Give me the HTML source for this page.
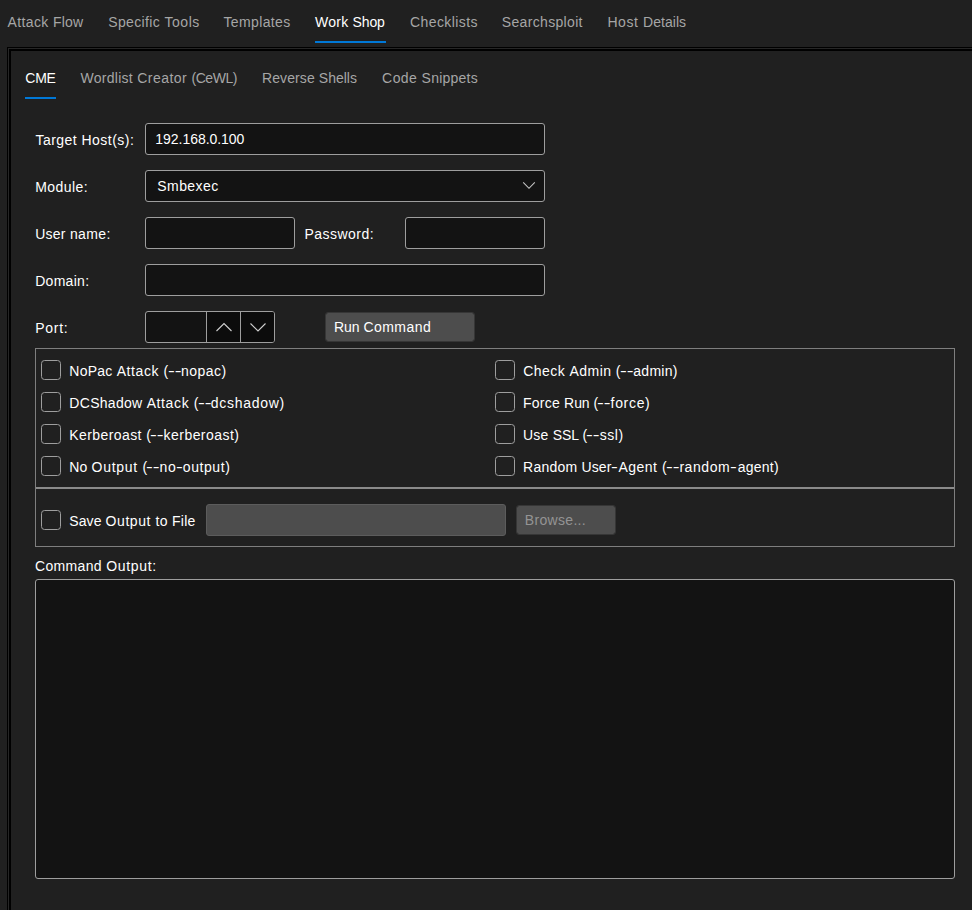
<!DOCTYPE html>
<html lang="en">
<head>
<meta charset="utf-8">
<title>Work Shop - CME</title>
<style>
html,body{margin:0;padding:0;}
body{width:972px;height:910px;background:#202020;overflow:hidden;position:relative;
  font-family:"Liberation Sans",sans-serif;font-size:14px;color:#fff;}
.abs{position:absolute;}
.t{position:absolute;white-space:nowrap;line-height:16px;height:16px;}
.tab{color:#a6a6a6;}
.tab.sel{color:#fff;}
.dis{color:#949494;}
.hy{display:inline-block;transform-origin:0 50%;}
.ul{position:absolute;height:2px;background:#0078d7;}
.frame-a{position:absolute;left:7px;top:47px;width:980px;height:900px;border:1px solid #000;box-sizing:border-box;}
.frame-b{position:absolute;left:9px;top:49px;width:980px;height:900px;border:2px solid #000;box-sizing:border-box;}
.frame-g{position:absolute;left:8px;top:48px;width:980px;height:900px;border:1px solid #262626;box-sizing:border-box;}
.inp{position:absolute;box-sizing:border-box;height:32px;background:#131313;border:1px solid #9e9e9e;border-radius:3px;}
.cb{position:absolute;box-sizing:border-box;width:20px;height:20px;border:1px solid #9e9e9e;border-radius:3.5px;background:#202020;}
.grp{position:absolute;left:35px;top:348px;width:920px;height:199px;box-sizing:border-box;border:1px solid #7e7e7e;}
.sep{position:absolute;left:36px;top:487px;width:918px;height:2px;background:#8a8a8a;}
.btn{position:absolute;box-sizing:border-box;background:#4d4d4d;border-radius:3px;border:1px solid #363636;background-clip:padding-box;}
</style>
</head>
<body>
<!-- main tabs -->
<span class="t tab" id="m1" style="left:7.40px;top:14px;"><span style="letter-spacing:0.415px">Attack </span><span style="letter-spacing:0.117px">Flow</span></span>
<span class="t tab" id="m2" style="left:108.24px;top:14px;"><span style="letter-spacing:0.366px">Specific </span><span style="letter-spacing:0.534px">Tools</span></span>
<span class="t tab" id="m3" style="left:223.50px;top:14px;"><span style="letter-spacing:0.362px">Templates</span></span>
<span class="t tab sel" id="m4" style="left:315.10px;top:14px;"><span style="letter-spacing:0.240px">Work </span><span style="letter-spacing:-0.170px">Shop</span></span>
<span class="t tab" id="m5" style="left:410.04px;top:14px;"><span style="letter-spacing:0.408px">Checklists</span></span>
<span class="t tab" id="m6" style="left:501.81px;top:14px;"><span style="letter-spacing:0.332px">Searchsploit</span></span>
<span class="t tab" id="m7" style="left:607.40px;top:14px;"><span style="letter-spacing:0.585px">Host </span><span style="letter-spacing:0.051px">Details</span></span>
<div class="ul" style="left:315px;top:41px;width:71px;"></div>

<div class="frame-a"></div><div class="frame-g"></div><div class="frame-b"></div>

<!-- sub tabs -->
<span class="t tab sel" id="s1" style="left:25.24px;top:70px;"><span style="letter-spacing:-0.215px">CME</span></span>
<span class="t tab" id="s2" style="left:80.40px;top:70px;"><span style="letter-spacing:0.289px">Wordlist </span><span style="letter-spacing:0.466px">Creator </span><span style="letter-spacing:-0.472px">(CeWL)</span></span>
<span class="t tab" id="s3" style="left:262.00px;top:70px;"><span style="letter-spacing:0.097px">Reverse </span><span style="letter-spacing:0.013px">Shells</span></span>
<span class="t tab" id="s4" style="left:382.10px;top:70px;"><span style="letter-spacing:0.428px">Code </span><span style="letter-spacing:0.231px">Snippets</span></span>
<div class="ul" style="left:25px;top:97px;width:31px;"></div>

<!-- form -->
<span class="t " id="l1" style="left:35.60px;top:132px;"><span style="letter-spacing:0.429px">Target </span><span style="letter-spacing:0.484px">Host(s):</span></span>
<div class="inp" role="textbox" style="left:145px;top:123px;width:400px;"></div>
<span class="t " id="v1" style="left:155.30px;top:131px;"><span style="letter-spacing:-0.037px">192.168.0.100</span></span>

<span class="t " id="l2" style="left:35.20px;top:179px;"><span style="letter-spacing:0.431px">Module:</span></span>
<div class="inp" role="textbox" style="left:145px;top:170px;width:400px;"></div>
<span class="t " id="v2" style="left:157.24px;top:178px;"><span style="letter-spacing:0.447px">Smbexec</span></span>
<svg class="abs" style="left:521px;top:180px;" width="16" height="12" viewBox="0 0 16 12"><path d="M2.2 2.4 L8 8.3 L13.8 2.4" fill="none" stroke="#c6c6c6" stroke-width="1.1"/></svg>

<span class="t " id="l3" style="left:35.20px;top:226px;"><span style="letter-spacing:0.250px">User </span><span style="letter-spacing:0.384px">name:</span></span>
<div class="inp" role="textbox" style="left:145px;top:217px;width:150px;"></div>
<span class="t " id="l4" style="left:304.40px;top:226px;"><span style="letter-spacing:0.491px">Password:</span></span>
<div class="inp" role="textbox" style="left:405px;top:217px;width:140px;"></div>

<span class="t " id="l5" style="left:35.20px;top:273px;"><span style="letter-spacing:0.289px">Domain:</span></span>
<div class="inp" role="textbox" style="left:145px;top:264px;width:400px;"></div>

<span class="t " id="l6" style="left:35.20px;top:320px;"><span style="letter-spacing:0.731px">Port:</span></span>
<div class="inp" role="textbox" style="left:145px;top:311px;width:130px;overflow:hidden;">
  <div class="abs" style="left:60px;top:0;width:68px;height:30px;background:#0c0c0c;"></div>
  <div class="abs" style="left:60px;top:0;width:1px;height:30px;background:#9e9e9e;"></div>
  <div class="abs" style="left:94px;top:0;width:1px;height:30px;background:#9e9e9e;"></div>
</div>
<svg class="abs" style="left:214px;top:320px;" width="20" height="14" viewBox="0 0 20 14"><path d="M2.5 11 L10 3.5 L17.5 11" fill="none" stroke="#d0d0d0" stroke-width="1.1"/></svg>
<svg class="abs" style="left:248px;top:320px;" width="20" height="14" viewBox="0 0 20 14"><path d="M2.5 3.5 L10 11 L17.5 3.5" fill="none" stroke="#d0d0d0" stroke-width="1.1"/></svg>

<div class="btn" role="button" style="left:325px;top:312px;width:150px;height:30px;"></div>
<span class="t " id="b1" style="left:334.00px;top:319px;"><span style="letter-spacing:-0.043px">Run </span><span style="letter-spacing:0.458px">Command</span></span>

<!-- options group -->
<div class="grp"></div>
<div class="sep"></div>
<div class="cb" role="checkbox" aria-checked="false" style="left:41px;top:360px;"></div>
<span class="t " id="c1" style="left:69.35px;top:363px;"><span style="letter-spacing:0.232px">NoPac </span><span style="letter-spacing:0.587px">Attack </span><span style="letter-spacing:-0.662px">(</span><span class="hy" style="transform:scaleX(1.45);margin-right:4.18px">--</span><span style="letter-spacing:0.449px">nopac)</span></span>
<div class="cb" role="checkbox" aria-checked="false" style="left:41px;top:392px;"></div>
<span class="t " id="c2" style="left:69.35px;top:395px;"><span style="letter-spacing:0.289px">DCShadow </span><span style="letter-spacing:0.615px">Attack </span><span style="letter-spacing:-0.762px">(</span><span class="hy" style="transform:scaleX(1.45);margin-right:3.68px">--</span><span style="letter-spacing:0.737px">dcshadow)</span></span>
<div class="cb" role="checkbox" aria-checked="false" style="left:41px;top:424px;"></div>
<span class="t " id="c3" style="left:69.35px;top:427px;"><span style="letter-spacing:0.403px">Kerberoast </span><span style="letter-spacing:-0.762px">(</span><span class="hy" style="transform:scaleX(1.45);margin-right:4.18px">--</span><span style="letter-spacing:0.458px">kerberoast)</span></span>
<div class="cb" role="checkbox" aria-checked="false" style="left:41px;top:456px;"></div>
<span class="t " id="c4" style="left:69.35px;top:459px;"><span style="letter-spacing:0.138px">No </span><span style="letter-spacing:0.712px">Output </span><span style="letter-spacing:-0.862px">(</span><span class="hy" style="transform:scaleX(1.45);margin-right:3.98px">--</span><span style="letter-spacing:0.564px">no</span><span class="hy" style="transform:scaleX(1.45);margin-right:1.84px">-</span><span style="letter-spacing:0.585px">output)</span></span>

<div class="cb" role="checkbox" aria-checked="false" style="left:495px;top:360px;"></div>
<span class="t " id="c5" style="left:523.24px;top:363px;"><span style="letter-spacing:0.438px">Check </span><span style="letter-spacing:0.471px">Admin </span><span style="letter-spacing:-0.762px">(</span><span class="hy" style="transform:scaleX(1.45);margin-right:4.18px">--</span><span style="letter-spacing:0.284px">admin)</span></span>
<div class="cb" role="checkbox" aria-checked="false" style="left:495px;top:392px;"></div>
<span class="t " id="c6" style="left:523.05px;top:395px;"><span style="letter-spacing:0.221px">Force </span><span style="letter-spacing:-0.043px">Run </span><span style="letter-spacing:-0.762px">(</span><span class="hy" style="transform:scaleX(1.45);margin-right:3.88px">--</span><span style="letter-spacing:0.681px">force)</span></span>
<div class="cb" role="checkbox" aria-checked="false" style="left:495px;top:424px;"></div>
<span class="t " id="c7" style="left:523.05px;top:427px;"><span style="letter-spacing:0.203px">Use </span><span style="letter-spacing:0.012px">SSL </span><span style="letter-spacing:-0.762px">(</span><span class="hy" style="transform:scaleX(1.45);margin-right:3.98px">--</span><span style="letter-spacing:0.560px">ssl)</span></span>
<div class="cb" role="checkbox" aria-checked="false" style="left:495px;top:456px;"></div>
<span class="t " id="c8" style="left:523.05px;top:459px;"><span style="letter-spacing:0.242px">Random </span><span style="letter-spacing:0.060px">User</span><span class="hy" style="transform:scaleX(1.45);margin-right:2.34px">-</span><span style="letter-spacing:0.504px">Agent </span><span style="letter-spacing:-0.762px">(</span><span class="hy" style="transform:scaleX(1.45);margin-right:4.28px">--</span><span style="letter-spacing:0.572px">random</span><span class="hy" style="transform:scaleX(1.45);margin-right:2.74px">-</span><span style="letter-spacing:0.249px">agent)</span></span>

<div class="cb" role="checkbox" aria-checked="false" style="left:41px;top:510px;"></div>
<span class="t " id="c9" style="left:69.24px;top:513px;"><span style="letter-spacing:0.100px">Save </span><span style="letter-spacing:0.583px">Output </span><span style="letter-spacing:0.312px">to </span><span style="letter-spacing:0.221px">File</span></span>
<div class="inp" role="textbox" style="left:206px;top:504px;width:300px;background:#4d4d4d;border-color:#5c5c5c;"></div>
<div class="btn" role="button" style="left:516px;top:505px;width:100px;height:30px;"></div>
<span class="t dis" id="b2" style="left:524.80px;top:512px;"><span style="letter-spacing:0.317px">Browse...</span></span>

<span class="t " id="l7" style="left:35.07px;top:558px;"><span style="letter-spacing:0.329px">Command </span><span style="letter-spacing:0.674px">Output:</span></span>
<div class="inp" role="textbox" style="left:35px;top:579px;width:920px;height:300px;"></div>
</body>
</html>
